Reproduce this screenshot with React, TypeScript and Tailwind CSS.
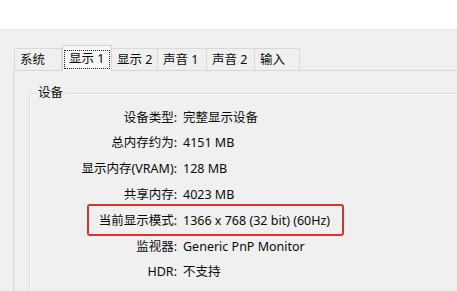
import React from "react";

const tabs = [
  { label: "系统", w: "w-[48px]" },
  { label: "显示 1", w: "w-[50px]", active: true },
  { label: "显示 2", w: "w-[46px]" },
  { label: "声音 1", w: "w-[49px]" },
  { label: "声音 2", w: "w-[48px]" },
  { label: "输入", w: "w-[45px]" },
];

const rows = [
  { label: "设备类型:", value: "完整显示设备" },
  { label: "总内存约为:", value: "4151 MB" },
  { label: "显示内存(VRAM):", value: "128 MB" },
  { label: "共享内存:", value: "4023 MB" },
  { label: "当前显示模式:", value: "1366 x 768 (32 bit) (60Hz)", mark: true },
  { label: "监视器:", value: "Generic PnP Monitor" },
  { label: "HDR:", value: "不支持" },
];

export default function App() {
  return (
    <div className="w-[457px] h-[291px] overflow-hidden bg-[#f0f0f0] text-[12.5px] text-[#0a0a0a] font-['Noto_Sans','Noto_Sans_CJK_SC',sans-serif]">
      <div className="h-[30px] bg-white border-b border-[#e8e8e8]" />

      <div className="pl-[13px] pt-[14px]">
        {/* tab strip */}
        <div className="flex items-end h-[26px] pl-[1px]">
          {tabs.map((t) =>
            t.active ? (
              <div
                key={t.label}
                className={`${t.w} h-[26px] -mb-px relative z-10 bg-[#f7f7f7] border border-b-0 border-[#d4d4d4] flex items-center px-[1px] pt-[1px]`}
              >
                <div className="w-full h-[19px] border border-dotted border-[#222] flex items-center pl-[4px] leading-none">
                  {t.label}
                </div>
              </div>
            ) : (
              <div
                key={t.label}
                className={`${t.w} h-[22px] bg-[#f0f0f0] border border-b-0 border-l-0 first:border-l border-[#d9d9d9] flex items-center pl-[5px] leading-none pt-[1px]`}
              >
                {t.label}
              </div>
            )
          )}
        </div>

        {/* panel */}
        <div className="h-[240px] border-l border-t border-[#d6d6d6] bg-[#f0f0f0] pl-[15px] pt-[22px]">
          <div className="relative h-[220px] border-l border-t border-[#dcdcdc] shadow-[inset_1px_1px_0_#fafafa]">
            <span className="absolute -top-[9px] left-[6px] px-[2px] bg-[#f0f0f0] leading-[16px]">设备</span>
            <div className="pt-[11px]">
              {rows.map((r) => (
                <div key={r.label} className="relative flex items-center h-[25.8px]">
                  {r.mark && (
                    <div className="absolute left-[57px] w-[257px] top-[-4px] bottom-[-2px] border-[2.5px] border-[#d8332b] rounded-[3px]" />
                  )}
                  <div className="w-[147px] text-right whitespace-nowrap">{r.label}</div>
                  <div className="pl-[6px] whitespace-nowrap">{r.value}</div>
                </div>
              ))}
            </div>
          </div>
        </div>
      </div>
    </div>
  );
}
